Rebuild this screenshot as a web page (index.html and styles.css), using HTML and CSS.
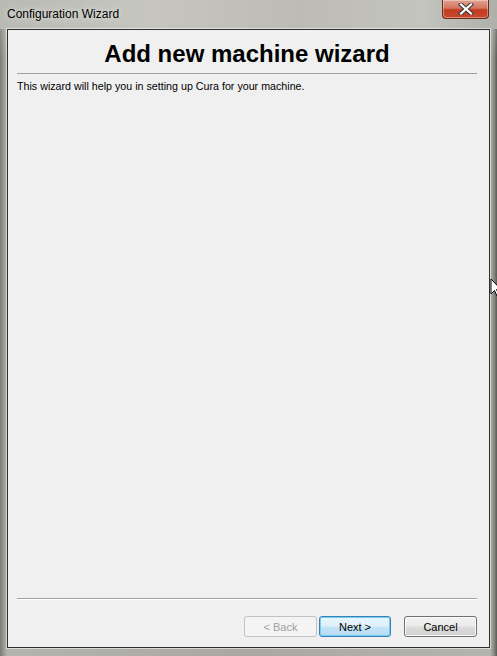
FILE: index.html
```html
<!DOCTYPE html>
<html>
<head>
<meta charset="utf-8">
<title>Configuration Wizard</title>
<link rel="stylesheet" href="styles.css">
</head>
<body>
<div class="window">
  <div class="titlebar">
    <span class="title-text">Configuration Wizard</span>
    <div class="close-btn">
      <svg width="18" height="12" viewBox="0 0 18 12">
        <path d="M4 1.5 L14 10.5 M14 1.5 L4 10.5" stroke="#3a3a3a" stroke-width="4.2" stroke-linecap="square"/>
        <path d="M4 1.5 L14 10.5 M14 1.5 L4 10.5" stroke="#ffffff" stroke-width="2.2" stroke-linecap="square"/>
      </svg>
    </div>
  </div>
  <div class="client">
    <div class="header">
      <h1 class="wizard-title">Add new machine wizard</h1>
    </div>
    <p class="intro">This wizard will help you in setting up Cura for your machine.</p>
    <div class="spacer"></div>
    <div class="footer">
      <div class="btn btn-disabled">&lt; Back</div>
      <div class="btn btn-default">Next &gt;</div>
      <div class="btn btn-normal btn-cancel">Cancel</div>
    </div>
  </div>
  <svg class="cursor" width="12" height="20" viewBox="0 0 12 20">
    <path d="M1 1 L1 16 L4.5 12.5 L7 18 L9 17 L6.5 11.5 L11 11.5 Z" fill="#ffffff" stroke="#000000" stroke-width="1"/>
  </svg>
</div>
</body>
</html>
```

FILE: styles.css
```css
html, body {
  margin: 0;
  padding: 0;
}

body {
  width: 497px;
  height: 656px;
  overflow: hidden;
  background: #8a8a84;
}

.window {
  position: relative;
  width: 497px;
  height: 656px;
  box-sizing: border-box;
  padding: 0 7px 8px 7px;
  display: flex;
  flex-direction: column;
  background:
    linear-gradient(180deg, rgba(255,255,255,0.35) 0px, rgba(255,255,255,0.15) 29px, rgba(0,0,0,0) 60px),
    linear-gradient(90deg, #7c7c72 0px, #9c9c94 4px, #b4b4ae 7px, #a8a8a0 50%, #b4b4ae calc(100% - 7px), #8a8a84 calc(100% - 3px), #5a5a56 100%);
}

.titlebar {
  height: 29px;
  flex: none;
  display: flex;
  align-items: flex-start;
  justify-content: space-between;
  background: linear-gradient(90deg, #b9bab4 0%, #c6c6bf 30%, #bcbcb4 60%, #c4c4be 85%, #b0b0aa 100%);
  margin: 0 -7px;
  padding: 0 7px 0 7px;
}

.title-text {
  font-family: "Liberation Sans", Arial, sans-serif;
  font-size: 12px;
  color: #000;
  margin-top: 7px;
  text-shadow: 0 0 6px rgba(255,255,255,0.9);
}

.close-btn {
  width: 45px;
  height: 18px;
  margin-right: 1px;
  border: 1px solid #6b2a1e;
  border-top: none;
  border-radius: 0 0 4px 4px;
  background: linear-gradient(180deg, #e2a293 0%, #d47560 45%, #c23b1f 55%, #c84a2e 100%);
  box-shadow: inset 0 0 0 1px rgba(255,255,255,0.35);
  display: flex;
  align-items: center;
  justify-content: center;
}

.client {
  flex: 1;
  display: flex;
  flex-direction: column;
  background: #f0f0f0;
  border: 1px solid #2e2e2e;
  box-shadow: 0 0 0 1px rgba(255,255,255,0.5);
  padding: 0 12px 10px 9px;
}

.header {
  padding-top: 10px;
  border-bottom: 1px solid #a0a0a0;
  padding-bottom: 5px;
}

.wizard-title {
  margin: 0;
  text-align: center;
  font-family: "Liberation Sans", Arial, sans-serif;
  font-weight: bold;
  font-size: 24px;
  line-height: 28px;
  color: #000;
}

.intro {
  margin: 6px 0 0 0;
  font-family: "Liberation Sans", Arial, sans-serif;
  font-size: 10.7px;
  line-height: 13px;
  color: #000;
}

.spacer {
  flex: 1;
}

.footer {
  border-top: 1px solid #a0a0a0;
  box-shadow: 0 1px 0 #ffffff inset;
  padding-top: 17px;
  display: flex;
  justify-content: flex-end;
  gap: 2px;
}

.btn {
  width: 73px;
  height: 21px;
  box-sizing: border-box;
  border-radius: 3px;
  font-family: "Liberation Sans", Arial, sans-serif;
  font-size: 11px;
  display: flex;
  align-items: center;
  justify-content: center;
  color: #000;
}

.btn-disabled {
  border: 1px solid #c2c2c2;
  background: #f4f4f4;
  color: #a0a0a0;
}

.btn-default {
  width: 72px;
  border: 1px solid #3c7fb1;
  background: linear-gradient(180deg, #e9f5fc 0%, #dff0fa 48%, #c6e4f7 52%, #b6daf1 100%);
  box-shadow: inset 0 0 0 1px #6fcff7;
}

.btn-normal {
  border: 1px solid #707070;
  background: linear-gradient(180deg, #f2f2f2 0%, #ebebeb 48%, #dddddd 52%, #cfcfcf 100%);
  box-shadow: inset 0 0 0 1px #fcfcfc;
}

.btn-cancel {
  margin-left: 11px;
}

.cursor {
  position: absolute;
  left: 490px;
  top: 278px;
}
```
